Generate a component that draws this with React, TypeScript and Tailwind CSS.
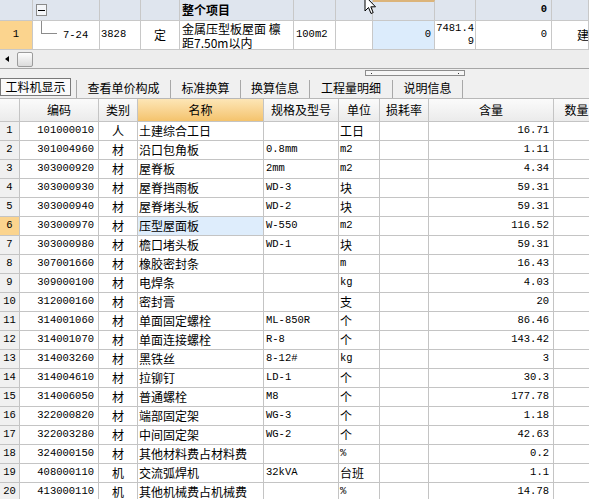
import React from 'react';

const CJK = "font-['Noto_Sans_CJK_SC',sans-serif] text-[12px]";
const MONO = "font-['Liberation_Mono','Noto_Sans_CJK_SC',monospace] text-[10.5px]";
const hasCJK = (s: string) => /[\u4e00-\u9fff]/.test(s);
const fontFor = (s: string) => (hasCJK(s) ? CJK : MONO);

type Item = { code: string; kind: string; name: string; spec: string; unit: string; qty: string };

const items: Item[] = [
    { code: '101000010', kind: '人', name: '土建综合工日', spec: '', unit: '工日', qty: '16.71' },
    { code: '301004960', kind: '材', name: '沿口包角板', spec: '0.8mm', unit: 'm2', qty: '1.11' },
    { code: '303000920', kind: '材', name: '屋脊板', spec: '2mm', unit: 'm2', qty: '4.34' },
    { code: '303000930', kind: '材', name: '屋脊挡雨板', spec: 'WD-3', unit: '块', qty: '59.31' },
    { code: '303000940', kind: '材', name: '屋脊堵头板', spec: 'WD-2', unit: '块', qty: '59.31' },
    { code: '303000970', kind: '材', name: '压型屋面板', spec: 'W-550', unit: 'm2', qty: '116.52' },
    { code: '303000980', kind: '材', name: '檐口堵头板', spec: 'WD-1', unit: '块', qty: '59.31' },
    { code: '307001660', kind: '材', name: '橡胶密封条', spec: '', unit: 'm', qty: '16.43' },
    { code: '309000100', kind: '材', name: '电焊条', spec: '', unit: 'kg', qty: '4.03' },
    { code: '312000160', kind: '材', name: '密封膏', spec: '', unit: '支', qty: '20' },
    { code: '314001060', kind: '材', name: '单面固定螺栓', spec: 'ML-850R', unit: '个', qty: '86.46' },
    { code: '314001070', kind: '材', name: '单面连接螺栓', spec: 'R-8', unit: '个', qty: '143.42' },
    { code: '314003260', kind: '材', name: '黑铁丝', spec: '8-12#', unit: 'kg', qty: '3' },
    { code: '314004610', kind: '材', name: '拉铆钉', spec: 'LD-1', unit: '个', qty: '30.3' },
    { code: '314006050', kind: '材', name: '普通螺栓', spec: 'M8', unit: '个', qty: '177.78' },
    { code: '322000820', kind: '材', name: '端部固定架', spec: 'WG-3', unit: '个', qty: '1.18' },
    { code: '322003280', kind: '材', name: '中间固定架', spec: 'WG-2', unit: '个', qty: '42.63' },
    { code: '324000150', kind: '材', name: '其他材料费占材料费', spec: '', unit: '%', qty: '0.2' },
    { code: '408000110', kind: '机', name: '交流弧焊机', spec: '32kVA', unit: '台班', qty: '1.1' },
    { code: '413000110', kind: '机', name: '其他机械费占机械费', spec: '', unit: '%', qty: '14.78' },
];

const tabs = [
    { label: '查看单价构成', w: 'w-[93px]' },
    { label: '标准换算', w: 'w-[69px]' },
    { label: '换算信息', w: 'w-[68px]' },
    { label: '工程量明细', w: 'w-[82px]' },
    { label: '说明信息', w: 'w-[69px]' },
];

const topCell = 'border-r border-b border-[#c8c8c8] overflow-hidden';
const gridCell = 'border-r border-b border-[#c4c4c4] overflow-hidden whitespace-nowrap flex items-center';

// the upper grid: one item line with its group header
const TopGrid: React.FC = () => (
    <div className="relative">
        <div className="grid grid-cols-[33px_67px_41px_39px_114px_42px_37px_62px_41px_76px_37px] text-black">
            {/* group header */}
            <div className={`${topCell} h-[21px] bg-[#dfe5ee]`} />
            <div className={`${topCell} h-[21px] bg-[#dfe5ee] pl-[3px] pt-[4px]`}>
                <div className="w-[11px] h-[12px] border border-[#8a8a8a] bg-[#f4f6f9] flex items-center justify-center">
                    <div className="w-[7px] h-[1px] bg-black" />
                </div>
            </div>
            <div className={`${topCell} h-[21px] bg-[#dfe5ee]`} />
            <div className={`${topCell} h-[21px] bg-[#dfe5ee]`} />
            <div className={`${topCell} h-[21px] bg-[#dfe5ee] ${CJK} font-bold pl-[2px] flex items-center`}>整个项目</div>
            <div className={`${topCell} h-[21px] bg-[#dfe5ee]`} />
            <div className={`${topCell} h-[21px] bg-[#dfe5ee]`} />
            <div className={`${topCell} h-[21px] bg-[#dfe5ee] border-t-2 border-t-[#dcb47a]`} />
            <div className={`${topCell} h-[21px] bg-[#dfe5ee]`} />
            <div className={`${topCell} h-[21px] bg-[#dfe5ee] ${MONO} font-bold flex items-center justify-end pr-[4px]`}>0</div>
            <div className={`${topCell} h-[21px] bg-[#dfe5ee]`} />

            {/* item line */}
            <div className={`${topCell} h-[29px] bg-[#fbd48e] ${MONO} flex items-center justify-center`}>1</div>
            <div className={`${topCell} h-[29px] flex items-center`}>
                <div className="ml-[8px] w-[16px] h-[13px] self-start border-l border-b border-[#8c8c8c]" />
                <span className={`${MONO} ml-[6px] mt-[2px]`}>7-24</span>
            </div>
            <div className={`${topCell} h-[29px] ${MONO} flex items-center pl-[1px]`}>3828</div>
            <div className={`${topCell} h-[29px] ${CJK} flex items-center justify-center`}>定</div>
            <div className={`${topCell} h-[29px] ${CJK} flex flex-col justify-center pl-[2px]`}>
                <span className="leading-[14px] h-[14px]">金属压型板屋面 檩</span>
                <span className="leading-[13px] h-[13px]">距7.50m以内</span>
            </div>
            <div className={`${topCell} h-[29px] ${MONO} flex items-center pl-[2px]`}>100m2</div>
            <div className={`${topCell} h-[29px]`} />
            <div className={`${topCell} h-[29px] bg-[#dcecfc] ${MONO} flex items-center justify-end pr-[3px]`}>0</div>
            <div className={`${topCell} h-[29px] ${MONO} leading-[13px] text-right pr-[1px] pt-[1px]`}>
                7481.4<br />9
            </div>
            <div className={`${topCell} h-[29px] ${MONO} flex items-center justify-end pr-[4px]`}>0</div>
            <div className={`${topCell} h-[29px] ${CJK} flex items-center pl-[25px]`}>建</div>
        </div>

        {/* mouse pointer */}
        <svg className="absolute left-[364px] top-[-5px]" width="14" height="21" viewBox="0 0 14 21">
            <path d="M1 1 L1 16 L4.5 12.5 L7 18.5 L9.2 17.6 L6.8 11.8 L11.5 11.8 Z" fill="#fff" stroke="#000" strokeWidth="1" strokeLinejoin="round" />
        </svg>
    </div>
);

const LowerGrid: React.FC = () => (
    <div className="grid grid-cols-[20px_79px_39px_126px_75px_41px_49px_125px_46px_60px] w-[660px]">
        {['', '编码', '类别', '名称', '规格及型号', '单位', '损耗率', '含量', '数量', ''].map((h, i) => (
            <div
                key={`h${i}`}
                className={`${gridCell} ${CJK} h-[23px] justify-center ${
                    i === 3 ? 'bg-gradient-to-b from-[#fde6b6] to-[#f4c36c]' : 'bg-gradient-to-b from-[#fbfbfb] to-[#ebebeb]'
                }`}
            >
                {h}
            </div>
        ))}
        {items.map((it, idx) => {
            const sel = idx === 5;
            return (
                <React.Fragment key={it.code}>
                    <div className={`${gridCell} ${MONO} h-[19px] justify-center ${sel ? 'bg-[#fbd48e]' : 'bg-[#f0f0f0]'}`}>{idx + 1}</div>
                    <div className={`${gridCell} ${MONO} h-[19px] justify-end pr-[4px]`}>{it.code}</div>
                    <div className={`${gridCell} ${CJK} h-[19px] justify-center`}>{it.kind}</div>
                    <div className={`${gridCell} ${CJK} h-[19px] pl-[1px] ${sel ? 'bg-[#deedfc]' : ''}`}>{it.name}</div>
                    <div className={`${gridCell} ${fontFor(it.spec)} h-[19px] pl-[2px]`}>{it.spec}</div>
                    <div className={`${gridCell} ${fontFor(it.unit)} h-[19px] pl-[1px]`}>{it.unit}</div>
                    <div className={`${gridCell} h-[19px]`} />
                    <div className={`${gridCell} ${MONO} h-[19px] justify-end pr-[4px]`}>{it.qty}</div>
                    <div className={`${gridCell} h-[19px]`} />
                    <div className={`${gridCell} h-[19px]`} />
                </React.Fragment>
            );
        })}
    </div>
);

export default function App() {
    return (
        <div className="w-[589px] h-[499px] overflow-hidden bg-white text-black">
            <TopGrid />

            {/* horizontal scroll bar */}
            <div className="h-[18px] bg-[#ededed] flex items-center">
                <div className="ml-[5px] w-0 h-0 border-y-[3px] border-y-transparent border-r-[4px] border-r-black" />
                <div className="ml-[8px] w-[16px] h-[15px] rounded-[2px] border border-[#9c9c9c] bg-gradient-to-b from-[#fdfdfd] to-[#dcdcdc]" />
            </div>

            {/* splitter */}
            <div className="h-[9px] border-t border-[#a6a6a6] bg-[#f0f0f0] flex items-start">
                <div className="ml-[365px] mt-[1px] w-[100px] h-[6px] border border-[#8c8c8c] bg-[#f6f6f6] flex items-center justify-between px-[5px]">
                    <div className="w-[1px] h-[1px] bg-[#333]" />
                    <div className="w-[1px] h-[1px] bg-[#333]" />
                </div>
            </div>

            {/* tab strip */}
            <div className={`h-[22px] bg-[#f0f0f0] border-b border-[#b8b8b8] flex items-stretch ${CJK}`}>
                <div className="mt-[1px] mb-[2px] w-[71px] border border-[#7a7a7a] bg-[#fafafa] flex items-center justify-center">
                    工料机显示
                </div>
                <div className="w-[5px]" />
                {tabs.map(t => (
                    <React.Fragment key={t.label}>
                        <div className="w-[1px] mt-[3px] bg-[#a8a8a8]" />
                        <div className={`${t.w} flex items-center justify-center`}>{t.label}</div>
                    </React.Fragment>
                ))}
                <div className="w-[1px] mt-[3px] bg-[#a8a8a8]" />
            </div>

            <LowerGrid />
        </div>
    );
}
